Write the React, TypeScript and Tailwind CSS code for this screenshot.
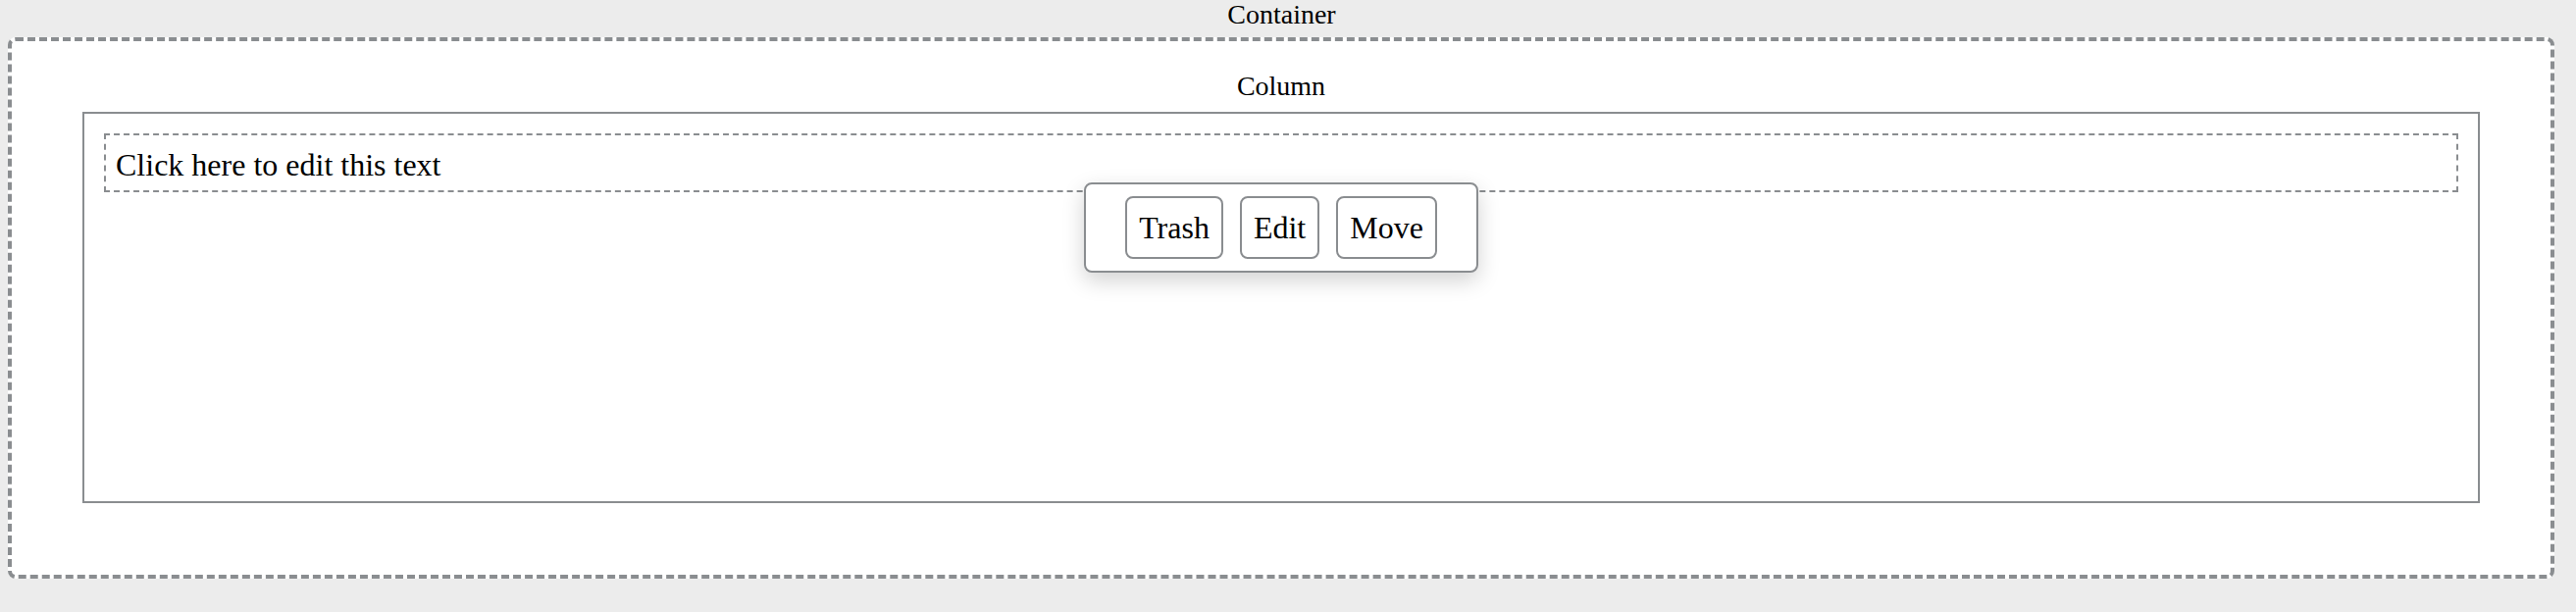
import React from "react";

export default function App() {
  const serif = { fontFamily: '"Liberation Serif", "Times New Roman", serif' };
  return (
    <div className="w-[2626px] h-[624px] bg-[#ececec] text-black overflow-hidden" style={serif}>
      <div className="text-center text-[28px] leading-[30px] mr-[13px]">Container</div>
      <div className="ml-[8px] mt-[8px] w-[2596px] h-[552px] border-4 border-dashed border-[#8a8d90] rounded-[8px] bg-white px-[72px] pt-[32px]">
        <div className="text-center text-[28px] leading-[28px]">Column</div>
        <div className="relative mt-[12px] h-[399px] border-2 border-solid border-[#8a8d90] p-[20px]">
          <div className="h-[60px] border-2 border-dashed border-[#8a8d90] pl-[10px] pt-[12px] pb-[8px] text-[32px] leading-[36px]">
            Click here to edit this text
          </div>
          <div className="absolute left-1/2 -translate-x-1/2 top-[70px] w-[402px] h-[92px] flex items-center justify-center gap-[17px] bg-white border-2 border-[#8a8d90] rounded-[8px] shadow-[0_8px_22px_rgba(0,0,0,0.18)]">
            <button className="h-[64px] px-[12px] border-2 border-[#8a8d90] rounded-[8px] bg-white text-[32px] leading-[36px]" style={serif}>Trash</button>
            <button className="h-[64px] px-[12px] border-2 border-[#8a8d90] rounded-[8px] bg-white text-[32px] leading-[36px]" style={serif}>Edit</button>
            <button className="h-[64px] px-[12px] border-2 border-[#8a8d90] rounded-[8px] bg-white text-[32px] leading-[36px]" style={serif}>Move</button>
          </div>
        </div>
      </div>
    </div>
  );
}
